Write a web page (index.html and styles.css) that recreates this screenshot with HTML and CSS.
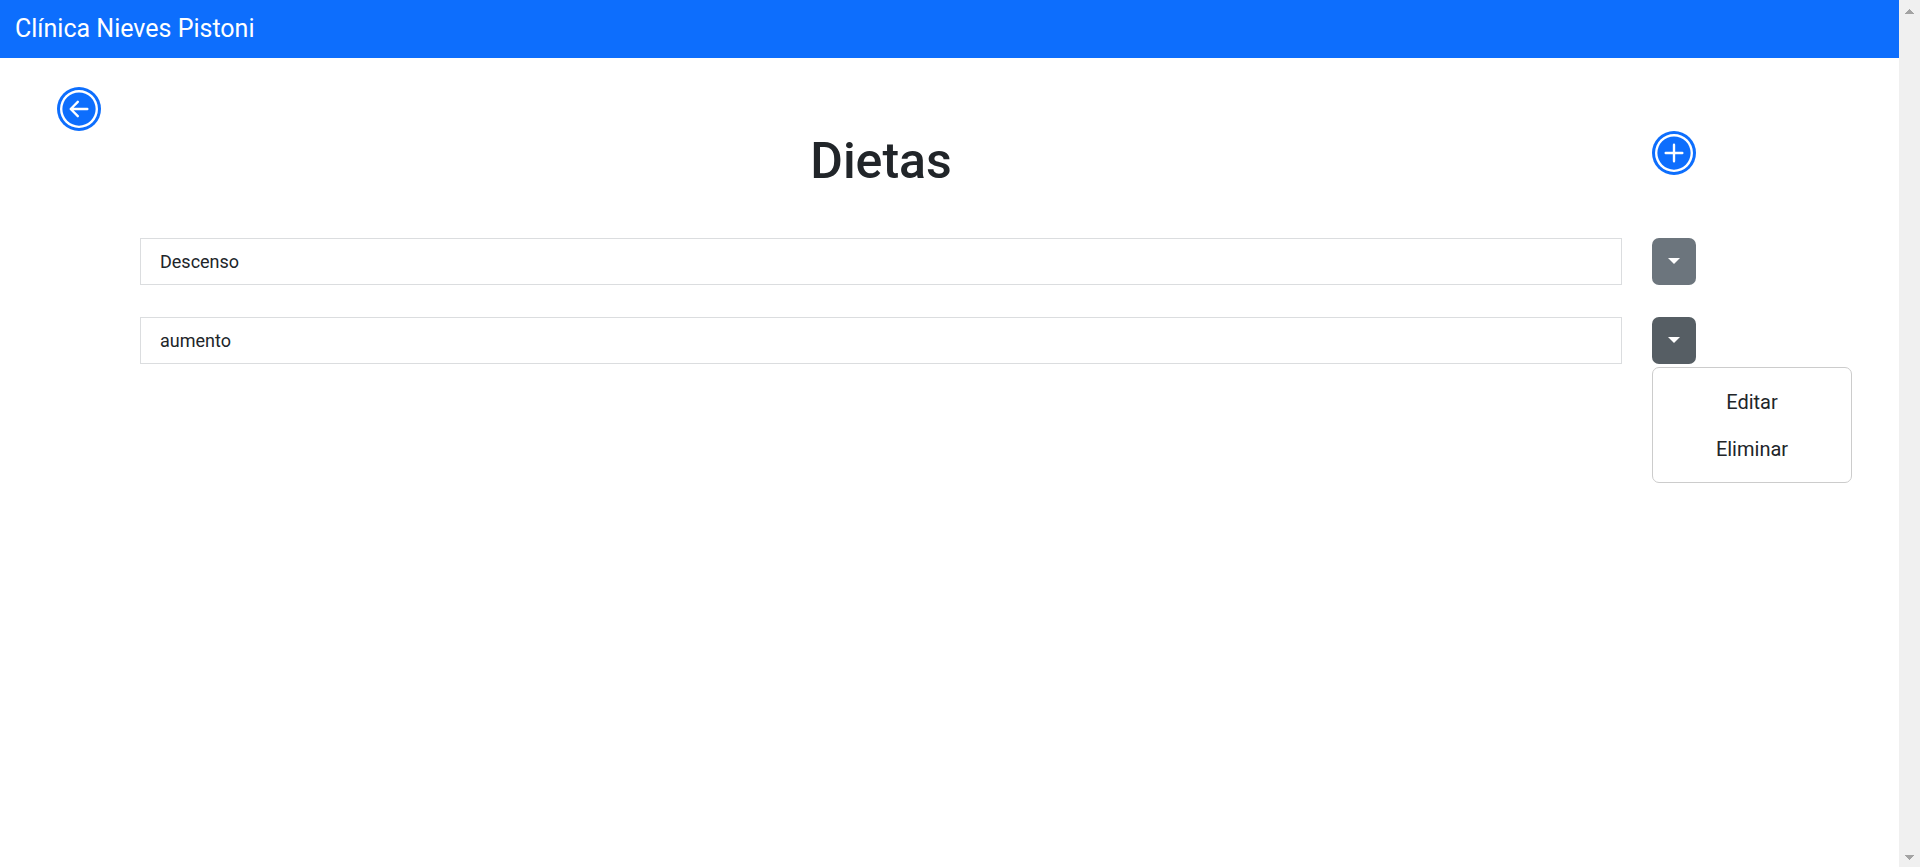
FILE: index.html
```html
<!DOCTYPE html>
<html lang="es">
<head>
  <meta charset="utf-8">
  <title>Clínica Nieves Pistoni</title>
  <link rel="stylesheet" href="styles.css">
</head>
<body>
  <div class="page">
    <header class="navbar"><a class="brand" href="#">Clínica Nieves Pistoni</a></header>
    <main class="content">
      <button class="round-button" type="button" aria-label="Volver">
        <svg class="icon" viewBox="0 0 16 16" fill="currentColor"><path fill-rule="evenodd" d="M1 8a7 7 0 1 0 14 0A7 7 0 0 0 1 8m15 0A8 8 0 1 1 0 8a8 8 0 0 1 16 0m-4.500-.5a.5.5 0 0 1 0 1H5.707l2.147 2.146a.5.5 0 0 1-.708.708l-3-3a.5.5 0 0 1 0-.708l3-3a.5.5 0 1 1 .708.708L5.707 7.500z"/></svg>
      </button>
      <section class="diets">
        <div class="row title-row">
          <h1 class="title">Dietas</h1>
          <button class="round-button" type="button" aria-label="Agregar dieta">
            <svg class="icon" viewBox="0 0 16 16" fill="currentColor"><path d="M8 15A7 7 0 1 1 8 1a7 7 0 0 1 0 14m0 1A8 8 0 1 0 8 0a8 8 0 0 0 0 16"/><path d="M8 4a.5.5 0 0 1 .5.5v3h3a.5.5 0 0 1 0 1h-3v3a.5.5 0 0 1-1 0v-3h-3a.5.5 0 0 1 0-1h3v-3A.5.5 0 0 1 8 4"/></svg>
          </button>
        </div>
        <div class="row">
          <div class="diet">Descenso</div>
          <div class="dropdown">
            <button class="toggle" type="button" aria-label="Opciones de Descenso"><span class="caret"></span></button>
          </div>
        </div>
        <div class="row">
          <div class="diet">aumento</div>
          <div class="dropdown">
            <button class="toggle open" type="button" aria-label="Opciones de aumento" aria-expanded="true"><span class="caret"></span></button>
            <div class="menu">
              <button class="menu-item" type="button">Editar</button>
              <button class="menu-item" type="button">Eliminar</button>
            </div>
          </div>
        </div>
      </section>
    </main>
  </div>
  <div class="scrollbar" aria-hidden="true">
    <svg class="scroll-arrow" viewBox="0 0 9 5" fill="currentColor" shape-rendering="crispEdges"><path d="M4 0h1v1h1v1h1v1h1v1h1v1H0V4h1V3h1V2h1V1h1z"/></svg>
    <svg class="scroll-arrow" viewBox="0 0 9 5" fill="currentColor" shape-rendering="crispEdges"><path d="M4 5h1V4h1V3h1V2h1V1h1V0H0v1h1v1h1v1h1v1h1z"/></svg>
  </div>
</body>
</html>
```
FILE: styles.css
```css
* {
  box-sizing: border-box;
}

body {
  display: flex;
  min-height: 100vh;
  margin: 0;
  background: #fff;
  color: #212529;
  font-family: Roboto, sans-serif;
  font-size: 18px;
  line-height: 27px;
}

button {
  padding: 0;
  border: 0;
  font: inherit;
  color: inherit;
}

.page {
  flex: 1;
}

.navbar {
  padding: 10px 15px;
  background: #0d6efd;
}

.brand {
  display: block;
  width: fit-content;
  color: #fff;
  font-size: 25px;
  line-height: 38px;
  text-decoration: none;
}

.content {
  padding: 29px 57px;
}

.round-button {
  display: flex;
  align-items: center;
  justify-content: center;
  width: 44px;
  height: 44px;
  border-radius: 50%;
  background: #0d6efd;
  color: #fff;
}

.icon {
  width: 38px;
  height: 38px;
}

.diets {
  display: flex;
  flex-direction: column;
  gap: 32px;
  padding: 0 146px 0 83px;
}

.row {
  display: grid;
  grid-template-columns: 1fr 44px;
  column-gap: 30px;
}

.title-row {
  margin-bottom: 15px;
}

.title {
  margin: 0;
  font-size: 50px;
  font-weight: 500;
  line-height: 60px;
  text-align: center;
}

.diet {
  padding: 9px 19px;
  border: 1px solid #dbdddf;
}

.dropdown {
  position: relative;
  display: grid;
}

.toggle {
  display: flex;
  align-items: center;
  justify-content: center;
  padding-bottom: 2px;
  border-radius: 7px;
  background: #6c757d;
}

.toggle.open {
  background: #565e64;
}

.caret {
  border-top: 6px solid #fff;
  border-right: 6px solid transparent;
  border-left: 6px solid transparent;
}

.menu {
  position: absolute;
  top: 100%;
  left: 0;
  width: 200px;
  margin-top: 3px;
  padding: 11px 0 9px;
  border: 1px solid #cccccc;
  border-radius: 7px;
  background: #fff;
}

.menu-item {
  display: block;
  width: 100%;
  padding: 10px;
  background: transparent;
  font-size: 20px;
}

.scrollbar {
  display: flex;
  flex-direction: column;
  align-items: center;
  justify-content: space-between;
  width: 21px;
  padding: 9px 0 7px;
  background: #f0f0f0;
  color: #a3a3a3;
}

.scroll-arrow {
  width: 9px;
  height: 5px;
}
```
